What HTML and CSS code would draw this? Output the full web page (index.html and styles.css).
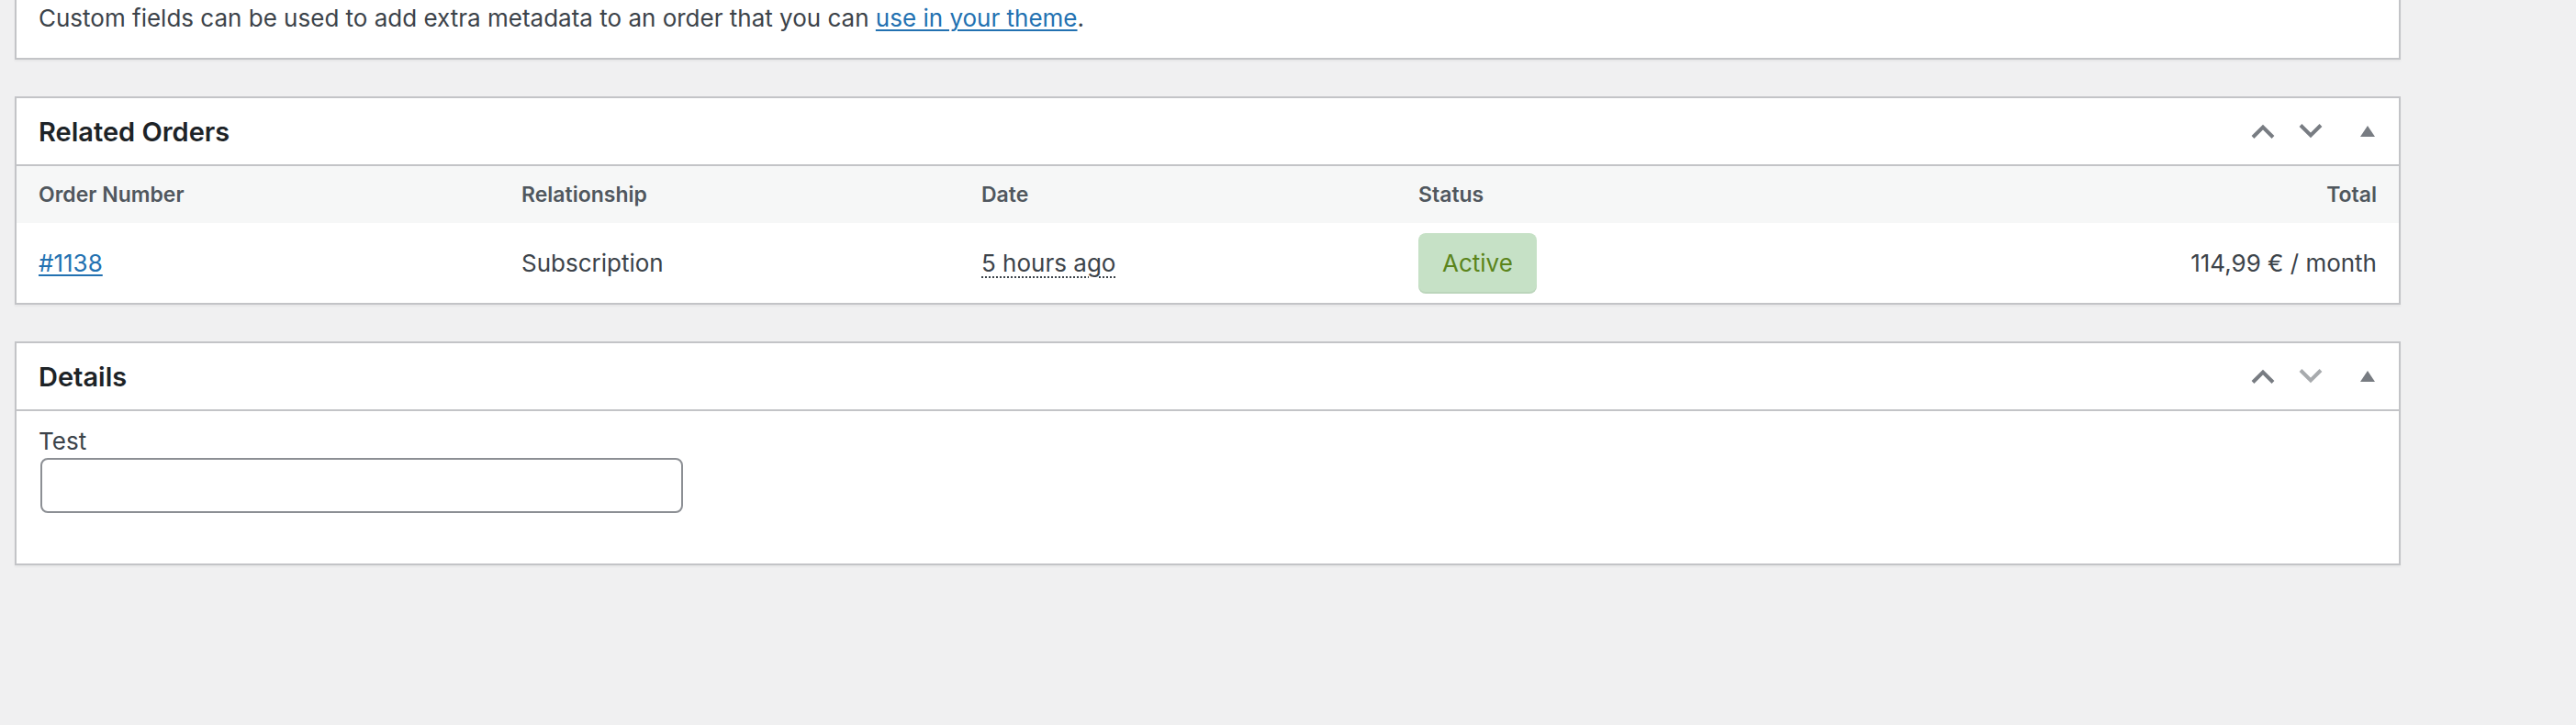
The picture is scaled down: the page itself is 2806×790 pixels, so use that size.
FILE: index.html
```html
<!DOCTYPE html>
<html lang="en">
<head>
<meta charset="utf-8">
<title>Order</title>
<link rel="stylesheet" href="styles.css">
</head>
<body>
<div class="wrap">
  <div class="postbox postbox-top">
    <div class="inside top-inside">
      <p class="desc">Custom fields can be used to add extra metadata to an order that you can <a href="#">use in your theme</a>.</p>
    </div>
  </div>

  <div class="postbox">
    <div class="postbox-header">
      <h2>Related Orders</h2>
      <div class="handle-actions">
        <button class="handle" type="button" aria-label="Move up">
          <svg width="26" height="16" viewBox="0 0 26 16"><polyline points="2,14.5 13,3.5 24,14.5" fill="none" stroke="#787c82" stroke-width="4"/></svg>
        </button>
        <button class="handle" type="button" aria-label="Move down">
          <svg width="26" height="16" viewBox="0 0 26 16"><polyline points="2,1.5 13,12.5 24,1.5" fill="none" stroke="#787c82" stroke-width="4"/></svg>
        </button>
        <button class="toggle" type="button" aria-label="Toggle panel">
          <svg width="16" height="12" viewBox="0 0 16 12"><polygon points="8,0 16,12 0,12" fill="#787c82"/></svg>
        </button>
      </div>
    </div>
    <table class="related">
      <colgroup>
        <col class="c1"><col class="c2"><col class="c3"><col class="c4"><col>
      </colgroup>
      <thead>
        <tr>
          <th>Order Number</th>
          <th>Relationship</th>
          <th>Date</th>
          <th>Status</th>
          <th class="total">Total</th>
        </tr>
      </thead>
      <tbody>
        <tr>
          <td><a href="#">#1138</a></td>
          <td>Subscription</td>
          <td><time class="ago" title="5 hours ago">5 hours ago</time></td>
          <td><mark class="status">Active</mark></td>
          <td class="total">114,99&nbsp;€ / month</td>
        </tr>
      </tbody>
    </table>
  </div>

  <div class="postbox">
    <div class="postbox-header">
      <h2>Details</h2>
      <div class="handle-actions">
        <button class="handle" type="button" aria-label="Move up">
          <svg width="26" height="16" viewBox="0 0 26 16"><polyline points="2,14.5 13,3.5 24,14.5" fill="none" stroke="#787c82" stroke-width="4"/></svg>
        </button>
        <button class="handle" type="button" aria-label="Move down">
          <svg width="26" height="16" viewBox="0 0 26 16"><polyline points="2,1.5 13,12.5 24,1.5" fill="none" stroke="#a7aaad" stroke-width="4"/></svg>
        </button>
        <button class="toggle" type="button" aria-label="Toggle panel">
          <svg width="16" height="12" viewBox="0 0 16 12"><polygon points="8,0 16,12 0,12" fill="#787c82"/></svg>
        </button>
      </div>
    </div>
    <div class="inside details">
      <label for="test" class="field-label">Test</label>
      <input id="test" type="text" class="field-input">
    </div>
  </div>
</div>
</body>
</html>
```

FILE: styles.css
```css
html, body {
  margin: 0;
  padding: 0;
}

body {
  background: #f0f0f1;
  font-family: Inter, "Noto Sans", "Liberation Sans", sans-serif;
  color: #3c434a;
}

.wrap {
  padding-left: 16px;
  width: 2599px;
}

.postbox {
  background: #fff;
  border: 2px solid #c3c4c7;
  box-shadow: 0 2px 2px rgba(0, 0, 0, 0.04);
  margin-bottom: 40px;
}

.postbox-top {
  margin-top: -30px;
}

.top-inside {
  padding: 28px 24px 24px;
}

.desc {
  margin: 0;
  font-size: 26px;
  line-height: 39px;
}

a {
  color: #2271b1;
  text-decoration: underline;
  text-decoration-thickness: 2px;
  text-underline-offset: 3px;
}

.postbox-header {
  display: flex;
  align-items: center;
  height: 72px;
  padding-left: 24px;
  border-bottom: 2px solid #c3c4c7;
}

.postbox-header h2 {
  flex: 1;
  margin: 0;
  padding-top: 2px;
  font-size: 29px;
  font-weight: 600;
  color: #1d2327;
  line-height: 40px;
}

.handle-actions {
  display: flex;
  height: 72px;
}

.handle,
.toggle {
  display: flex;
  align-items: center;
  justify-content: center;
  width: 52px;
  height: 72px;
  padding: 0;
  margin: 0;
  border: 0;
  background: none;
}

.toggle {
  width: 72px;
  margin-right: -2px;
}

.handle svg,
.toggle svg {
  display: block;
}

.related {
  width: 100%;
  border-collapse: collapse;
  table-layout: fixed;
}

.related .c1 { width: 526px; }
.related .c2 { width: 501px; }
.related .c3 { width: 476px; }
.related .c4 { width: 300px; }

.related th {
  height: 62px;
  padding: 0 24px;
  background: #f6f7f7;
  text-align: left;
  font-size: 23px;
  font-weight: 600;
  color: #50575e;
  box-sizing: border-box;
}

.related td {
  height: 87px;
  padding: 0 24px;
  font-size: 26px;
  line-height: 39px;
  color: #3c434a;
  box-sizing: border-box;
  vertical-align: middle;
}

.related .total {
  text-align: right;
}

.ago {
  text-decoration: underline dotted #3c434a;
  text-decoration-thickness: 2px;
  text-underline-offset: 5px;
}

.status {
  display: inline-block;
  padding: 0 26px;
  line-height: 66px;
  border-radius: 8px;
  background: #c6e1c6;
  color: #5b841b;
  font-size: 26px;
  box-shadow: inset 0 -2px 0 rgba(0, 0, 0, 0.05);
}

.details {
  padding: 15px 24px 55px;
}

.field-label {
  display: block;
  font-size: 26px;
  line-height: 36px;
  color: #3c434a;
}

.field-input {
  display: block;
  box-sizing: border-box;
  width: 700px;
  height: 60px;
  margin: 0 2px;
  padding: 0 16px;
  border: 2px solid #8c8f94;
  border-radius: 8px;
  background: #fff;
  font-family: inherit;
  font-size: 26px;
}
```
